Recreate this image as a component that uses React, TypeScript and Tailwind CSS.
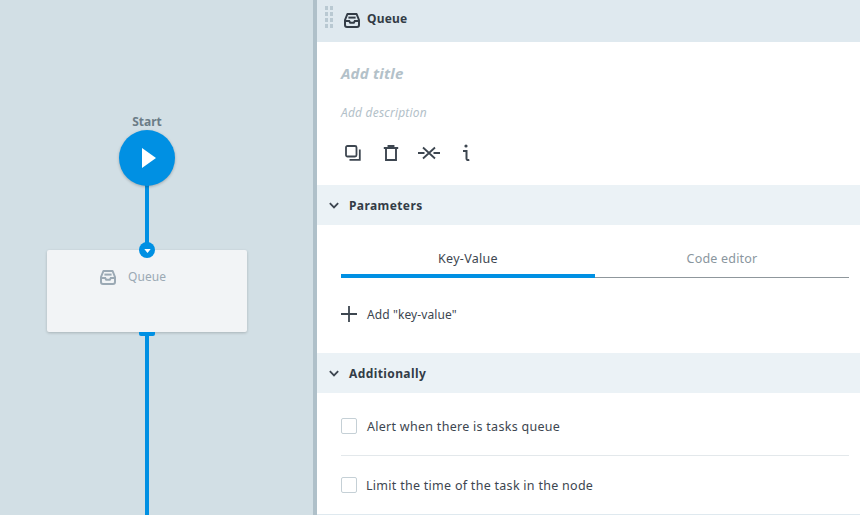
const font = { fontFamily: '"Noto Sans", "Liberation Sans", sans-serif' };

function InboxIcon({ className }: { className: string }) {
  return (
    <svg viewBox="0 0 16 15" fill="none" stroke="currentColor" strokeWidth="2" className={className}>
      <path d="M3.4 1h9.2l2.4 6v5a2 2 0 0 1-2 2H3a2 2 0 0 1-2-2V7z" strokeLinejoin="round" />
      <path d="M1.4 8h3.8l1 1.8h3.6l1-1.8h3.8" />
      <path d="M4.4 4.6h7.2" />
    </svg>
  );
}

function Chevron() {
  return (
    <svg viewBox="0 0 12 8" fill="none" stroke="currentColor" strokeWidth="2.2" className="w-[10px] h-[7px] text-[#3d4650]">
      <path d="M1 1.2l5 5 5-5" />
    </svg>
  );
}

function SectionHeader({ title }: { title: string }) {
  return (
    <div className="h-10 bg-[#ebf2f6] flex items-center pl-[12px] gap-[10px]">
      <Chevron />
      <span className="text-[12px] font-bold tracking-[0.4px] leading-[16px] mt-[1px] text-[#333c46]">{title}</span>
    </div>
  );
}

function CheckRow({ label, gap }: { label: string; gap: string }) {
  return (
    <div className={`flex items-start ${gap}`}>
      <div className="w-4 h-4 rounded-[2px] border border-[#c5d0d6] bg-white" />
      <span className="text-[12.5px] leading-[16px] mt-[1px] tracking-[0.28px] text-[#3d4650]">{label}</span>
    </div>
  );
}

export default function App() {
  return (
    <div className="w-[860px] h-[515px] flex overflow-hidden bg-white" style={font}>
      {/* canvas */}
      <div className="w-[313px] h-full bg-[#d2dfe5] relative shrink-0">
        <div className="absolute left-[145px] top-[180px] w-[4px] h-[70px] bg-[#0090e3]" />
        <div className="absolute left-[145px] top-[330px] w-[4px] h-[185px] bg-[#0090e3]" />
        <div className="absolute left-[119px] top-[114px] w-[56px] text-center text-[12px] font-bold leading-[16px] text-[#6b7c87]">Start</div>
        <div className="absolute left-[119px] top-[130px] w-14 h-14 rounded-full bg-[#0090e3] shadow-[0_1px_3px_rgba(0,0,0,0.25)] flex items-center justify-center">
          <svg viewBox="0 0 14 20" className="w-[14px] h-[20px] ml-[4px]" fill="#fff">
            <path d="M0 0l14 10L0 20z" />
          </svg>
        </div>
        <div className="absolute left-[47px] top-[250px] w-[200px] h-[82px] bg-[#f2f4f6] rounded-[2px] shadow-[0_1px_3px_rgba(0,0,0,0.2)]">
          <div className="flex items-center pl-[53px] pt-[19px] gap-[12px]">
            <InboxIcon className="w-4 h-[15px] text-[#9ba9b4]" />
            <span className="text-[12px] tracking-[0.1px] leading-[16px] text-[#9ba9b4]">Queue</span>
          </div>
        </div>
        <div className="absolute left-[139px] top-[242px] w-4 h-4 rounded-full bg-[#0090e3] flex items-center justify-center">
          <svg viewBox="0 0 8 5" className="w-[7px] h-[4px] mt-[1px]" fill="#fff">
            <path d="M0 0h8L4 5z" />
          </svg>
        </div>
        <div className="absolute left-[139px] top-[332px] w-4 h-[4px] rounded-b-[2px] bg-[#0090e3]" />
      </div>
      <div className="w-[4px] h-full bg-[#afc0c9] shrink-0" />

      {/* panel */}
      <div className="flex-1 flex flex-col min-w-0">
        <div className="h-[42px] bg-[#dfe9ef] flex items-center relative pl-[27px] gap-[7px] pb-[4px]">
          <div className="absolute left-[8px] top-[6px] grid grid-cols-2 gap-x-[2px] gap-y-[2px]">
            {Array.from({ length: 8 }).map((_, i) => (
              <div key={i} className="w-[3px] h-[4px] bg-[#b9c9d2]" />
            ))}
          </div>
          <InboxIcon className="w-4 h-[15px] mt-[2px] text-[#333c46]" />
          <span className="text-[12px] font-bold tracking-[0.2px] text-[#333c46]">Queue</span>
        </div>

        <div className="h-[143px] pl-[24px] flex flex-col">
          <div className="pt-[20px] text-[15px] font-bold italic leading-[22px] tracking-[0.2px] text-[#b3c1c9]">Add title</div>
          <div className="pt-[21px] text-[12px] italic leading-[16px] tracking-[0.2px] text-[#b3c1c9]">Add description</div>
          <div className="flex items-center mt-[23px] text-[#3d4650] h-[18px]">
            <svg viewBox="0 0 16 16" fill="none" stroke="currentColor" strokeWidth="1.8" className="w-4 h-4 ml-[4px]">
              <rect x="1" y="1" width="10.5" height="10.5" rx="1.5" />
              <path d="M14.8 4.5v10.3H4.5" />
            </svg>
            <svg viewBox="0 0 16 16" fill="none" stroke="currentColor" strokeWidth="1.9" className="w-4 h-4 ml-[22px]">
              <path d="M0.8 3h14.4M3 3v12h10V3M5.5 3V1h5v2" />
            </svg>
            <svg viewBox="0 0 22 16" fill="none" stroke="currentColor" strokeWidth="1.8" className="w-[22px] h-4 ml-[19px]">
              <path d="M0 8h6.5M15.5 8H22M5 2.5l12 11M17 2.5l-12 11" />
            </svg>
            <svg viewBox="0 0 10 18" fill="none" stroke="currentColor" strokeWidth="2" className="w-[10px] h-[18px] ml-[21px]">
              <circle cx="5" cy="2" r="1.6" fill="currentColor" stroke="none" />
              <path d="M2 7h3.5v7.5c0 1.3.7 1.8 2.8 1.5" />
            </svg>
          </div>
        </div>

        <SectionHeader title="Parameters" />

        <div className="h-[128px] px-[24px] pr-[11px]">
          <div className="flex pt-[23px] h-[53px] border-b border-[#8f979c] relative">
            <div className="w-1/2 text-center text-[12.5px] leading-[22px] tracking-[0.3px] text-[#3d4650]">Key-Value</div>
            <div className="w-1/2 text-center text-[12.5px] leading-[22px] tracking-[0.2px] text-[#8a969e]">Code editor</div>
            <div className="absolute left-0 bottom-[-1px] w-[254px] h-[4px] bg-[#0090e3]" />
          </div>
          <div className="flex items-center mt-[26px] h-[20px] gap-[10px]">
            <svg viewBox="0 0 16 16" fill="none" stroke="#3d4650" strokeWidth="1.8" className="w-4 h-4">
              <path d="M8 0v16M0 8h16" />
            </svg>
            <span className="text-[12px] tracking-[0.1px] leading-[16px] mt-[1px] text-[#3d4650]">Add "key-value"</span>
          </div>
        </div>

        <SectionHeader title="Additionally" />

        <div className="flex-1 pl-[24px] pr-[11px] border-b border-[#dfe9ef]">
          <div className="h-[63px] pt-[25px] border-b border-[#e3e8eb]">
            <CheckRow label="Alert when there is tasks queue" gap="gap-[10px]" />
          </div>
          <div className="pt-[21px]">
            <CheckRow label="Limit the time of the task in the node" gap="gap-[9px]" />
          </div>
        </div>
      </div>
    </div>
  );
}
